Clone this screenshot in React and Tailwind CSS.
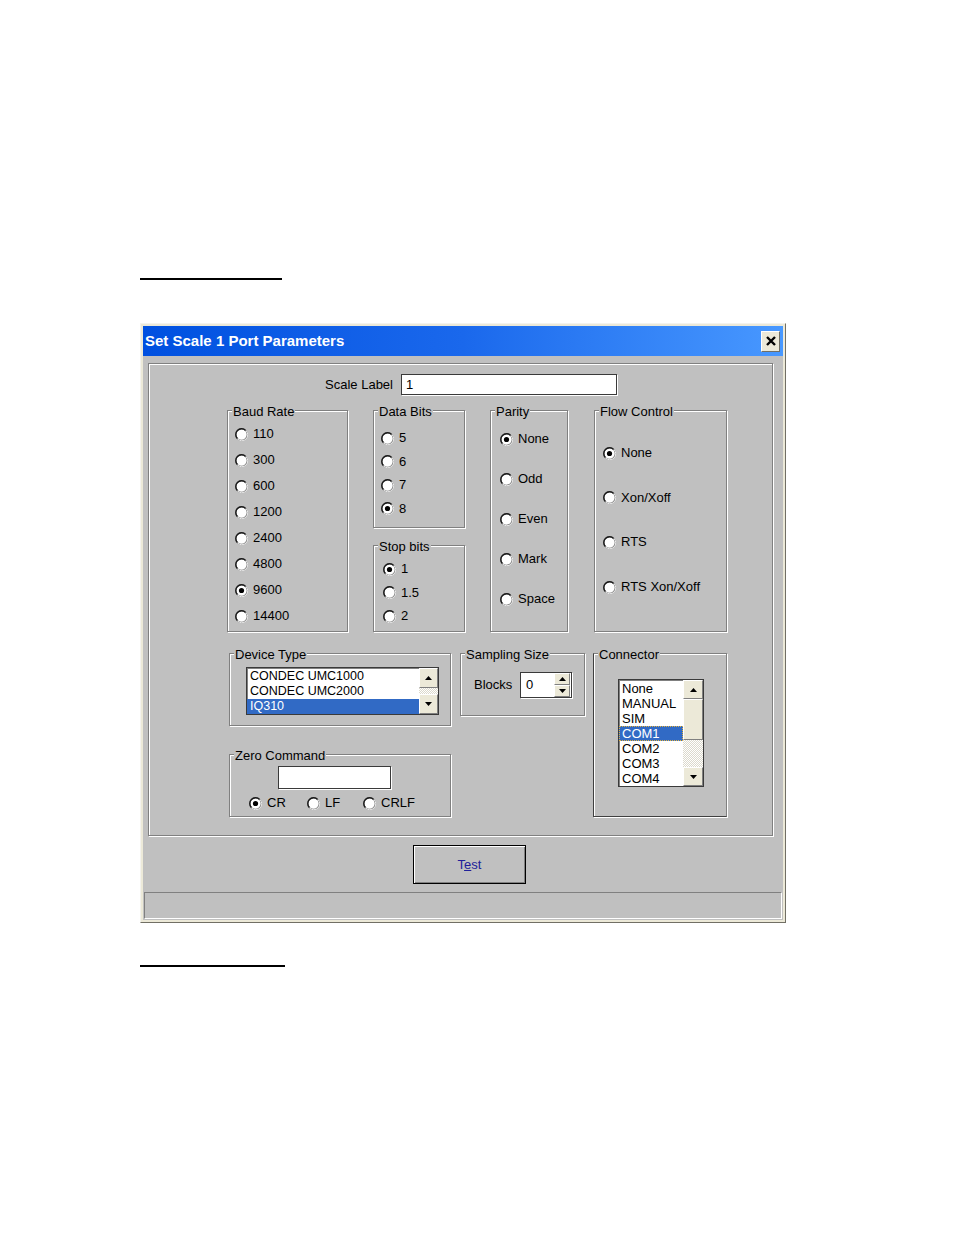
import React from 'react';

const DEVICES = ['CONDEC UMC1000', 'CONDEC UMC2000', 'IQ310'];
const CONNECTORS = ['None', 'MANUAL', 'SIM', 'COM1', 'COM2', 'COM3', 'COM4'];

function Radio({ checked }) {
  return (
    <svg width="13" height="13" viewBox="0 0 13 13" className="shrink-0">
      <circle cx="6.5" cy="6.5" r="5.8" fill="#fff" stroke="#6e6e6e" strokeWidth="1.2" />
      <path d="M2.4 10.6 A5.8 5.8 0 0 1 10.6 2.4" fill="none" stroke="#1a1a1a" strokeWidth="1.4" />
      <path d="M11 2.6 A5.8 5.8 0 0 1 2.6 11" fill="none" stroke="#e8e8e8" strokeWidth="1" />
      {checked && <circle cx="6.5" cy="6.5" r="2.6" fill="#000" />}
    </svg>
  );
}

function Option({ label, checked }) {
  return (
    <div className="flex h-[16px] items-center gap-[5px] leading-[16px]">
      <Radio checked={checked} />
      <span>{label}</span>
    </div>
  );
}

function Group({ label, className, children }) {
  return (
    <div className={`relative border border-[#808080] shadow-[inset_1px_1px_0_#fff,1px_1px_0_#fff] ${className}`}>
      <span className="absolute -top-[7px] left-[4px] bg-[#c0c0c0] px-[1px] leading-[16px]">{label}</span>
      {children}
    </div>
  );
}

function Arrow({ up }) {
  return (
    <svg width="7" height="4" viewBox="0 0 7 4">
      <path d={up ? 'M0 4 L3.5 0 L7 4 Z' : 'M0 0 L3.5 4 L7 0 Z'} fill="#000" />
    </svg>
  );
}

function ScrollButton({ up, className }) {
  return (
    <div className={`flex items-center justify-center border border-t-white border-l-white border-r-[#808080] border-b-[#808080] bg-[#ece9d8] ${className}`}>
      <Arrow up={up} />
    </div>
  );
}

function Track({ className }) {
  return (
    <div className={`bg-[repeating-conic-gradient(#ffffff_0_25%,#dcd9cc_0_50%)] bg-[length:2px_2px] ${className}`} />
  );
}

export default function App() {
  return (
    <div className="min-h-[1235px] bg-white pt-[278px] font-['Liberation_Sans',Arial,sans-serif] text-[13px] text-black">
      <div className="ml-[140px] h-[2px] w-[142px] bg-black" />

      {/* dialog */}
      <div className="ml-[140px] mt-[43px] w-[646px] border border-t-[#f4f3ee] border-l-[#f4f3ee] border-r-[#716f64] border-b-[#716f64] bg-[#ece9d8] p-[2px]">
        <div className="flex h-[30px] items-center justify-between bg-linear-to-r from-[#0050e0] via-[#1a68ec] to-[#4898ff] pl-[2px] pr-[3px]">
          <span className="text-[15px] font-bold text-white">Set Scale 1 Port Parameters</span>
          <div className="flex h-[21px] w-[19px] items-center justify-center border border-t-white border-l-white border-r-[#716f64] border-b-[#716f64] bg-[#ece9d8]">
            <svg width="10" height="10" viewBox="0 0 10 10">
              <path d="M1 1 L9 9 M9 1 L1 9" stroke="#000" strokeWidth="2.4" />
            </svg>
          </div>
        </div>

        <div className="bg-[#c0c0c0] pb-px pt-[7px]">
          {/* main panel */}
          <div className="ml-[5px] h-[473px] w-[625px] border border-[#808080] shadow-[inset_1px_1px_0_#fff,1px_1px_0_#fff]">
            <div className="mt-[10px] flex items-center">
              <span className="w-[244px] text-right">Scale Label</span>
              <div className="ml-[8px] flex h-[21px] w-[216px] items-center border border-[#3a3a3a] bg-white pl-[4px] shadow-[1px_1px_0_#fff]">
                1
              </div>
            </div>

            {/* row of option groups */}
            <div className="mt-[15px] flex pl-[78px]">
              <Group label="Baud Rate" className="h-[222px] w-[121px]">
                <div className="flex flex-col gap-[10px] pl-[7px] pt-[15px]">
                  <Option label="110" />
                  <Option label="300" />
                  <Option label="600" />
                  <Option label="1200" />
                  <Option label="2400" />
                  <Option label="4800" />
                  <Option label="9600" checked />
                  <Option label="14400" />
                </div>
              </Group>

              <div className="ml-[25px] flex w-[92px] flex-col gap-[17px]">
                <Group label="Data Bits" className="h-[118px]">
                  <div className="flex flex-col gap-[7.5px] pl-[7px] pt-[19px]">
                    <Option label="5" />
                    <Option label="6" />
                    <Option label="7" />
                    <Option label="8" checked />
                  </div>
                </Group>
                <Group label="Stop bits" className="h-[87px]">
                  <div className="flex flex-col gap-[7.5px] pl-[9px] pt-[15px]">
                    <Option label="1" checked />
                    <Option label="1.5" />
                    <Option label="2" />
                  </div>
                </Group>
              </div>

              <Group label="Parity" className="ml-[25px] h-[222px] w-[78px]">
                <div className="flex flex-col gap-[24px] pl-[9px] pt-[20px]">
                  <Option label="None" checked />
                  <Option label="Odd" />
                  <Option label="Even" />
                  <Option label="Mark" />
                  <Option label="Space" />
                </div>
              </Group>

              <Group label="Flow Control" className="ml-[26px] h-[222px] w-[133px]">
                <div className="flex flex-col gap-[28.7px] pl-[8px] pt-[34px]">
                  <Option label="None" checked />
                  <Option label="Xon/Xoff" />
                  <Option label="RTS" />
                  <Option label="RTS Xon/Xoff" />
                </div>
              </Group>
            </div>

            {/* lower row */}
            <div className="mt-[21px] flex pl-[80px]">
              <div className="flex w-[222px] flex-col gap-[28px]">
                <Group label="Device Type" className="h-[73px]">
                  <div className="ml-[16px] mt-[13px] flex h-[48px] w-[193px] border border-[#3a3a3a] bg-white shadow-[inset_1px_1px_0_#808080]">
                    <div className="flex flex-1 flex-col pt-px">
                      {DEVICES.map((d, i) => (
                        <div
                          key={d}
                          className={`h-[15px] pl-[3px] text-[12.5px] leading-[15px] ${i === 2 ? 'bg-[#316ac5] text-white' : ''}`}
                        >
                          {d}
                        </div>
                      ))}
                    </div>
                    <div className="flex w-[19px] flex-col">
                      <ScrollButton up className="h-[20px]" />
                      <Track className="flex-1" />
                      <ScrollButton className="h-[20px]" />
                    </div>
                  </div>
                </Group>

                <Group label="Zero Command" className="h-[63px]">
                  <div className="ml-[48px] mt-[11px] h-[23px] w-[113px] border border-[#3a3a3a] bg-white shadow-[1px_1px_0_#fff]" />
                  <div className="mt-[6px] flex pl-[19px]">
                    <div className="w-[58px]">
                      <Option label="CR" checked />
                    </div>
                    <div className="w-[56px]">
                      <Option label="LF" />
                    </div>
                    <Option label="CRLF" />
                  </div>
                </Group>
              </div>

              <Group label="Sampling Size" className="ml-[9px] h-[63px] w-[125px]">
                <div className="mt-[18px] flex items-center pl-[13px]">
                  <span className="w-[46px]">Blocks</span>
                  <div className="flex h-[26px] w-[52px] items-center border border-[#3a3a3a] bg-white pl-[5px] shadow-[1px_1px_0_#fff]">
                    <span className="flex-1">0</span>
                    <div className="mr-px flex w-[16px] flex-col">
                      <ScrollButton up className="h-[12px]" />
                      <ScrollButton className="h-[12px]" />
                    </div>
                  </div>
                </div>
              </Group>

              <Group
                label="Connector"
                className="ml-[8px] h-[164px] w-[134px] border-l-[#404040] border-b-[#404040]"
              >
                <div className="ml-[24px] mt-[25px] flex h-[108px] w-[86px] border border-[#3a3a3a] bg-white shadow-[inset_1px_1px_0_#808080]">
                  <div className="flex flex-1 flex-col pt-px">
                    {CONNECTORS.map((c) => (
                      <div
                        key={c}
                        className={`h-[15px] pl-[3px] leading-[15px] ${c === 'COM1' ? 'bg-[#316ac5] text-white outline-1 -outline-offset-1 outline-dotted outline-[#e0b040]' : ''}`}
                      >
                        {c}
                      </div>
                    ))}
                  </div>
                  <div className="flex w-[20px] flex-col">
                    <ScrollButton up className="h-[19px]" />
                    <div className="h-[41px] border border-t-white border-l-white border-r-[#808080] border-b-[#808080] bg-[#ece9d8]" />
                    <Track className="flex-1" />
                    <ScrollButton className="h-[19px]" />
                  </div>
                </div>
              </Group>
            </div>
          </div>

          {/* test button */}
          <div className="ml-[270px] mt-[9px] flex h-[39px] w-[113px] items-center justify-center border border-black bg-[#c0c0c0] shadow-[inset_1px_1px_0_#fff,inset_-1px_-1px_0_#808080]">
            <span className="text-[#20209a]">
              T<span className="underline">e</span>st
            </span>
          </div>

          {/* status bar */}
          <div className="ml-px mt-[8px] h-[27px] w-[638px] border border-t-[#808080] border-l-[#808080] border-r-white border-b-white" />
        </div>
      </div>

      <div className="ml-[140px] mt-[42px] h-[2px] w-[145px] bg-black" />
    </div>
  );
}
